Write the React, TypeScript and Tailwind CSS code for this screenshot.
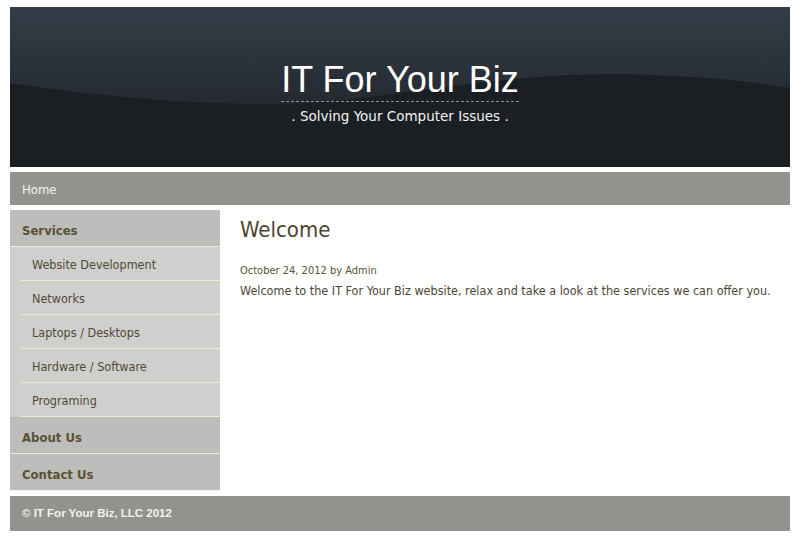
import React from "react";

const services = [
  "Website Development",
  "Networks",
  "Laptops / Desktops",
  "Hardware / Software",
  "Programing",
];

function HeaderBg() {
  return (
    <svg
      className="absolute inset-0 h-full w-full"
      viewBox="0 0 780 160"
      preserveAspectRatio="none"
    >
      <defs>
        <linearGradient id="sky" x1="0" y1="0" x2="0" y2="1">
          <stop offset="0" stopColor="#343d48" />
          <stop offset="1" stopColor="#252a30" />
        </linearGradient>
      </defs>
      <rect width="780" height="160" fill="#1b1e22" />
      <path
        d="M0 0 H780 V81 C700 68 620 66 560 68 C470 72 380 90 300 96 C200 100 90 90 0 76 Z"
        fill="url(#sky)"
      />
    </svg>
  );
}

const sideHead =
  "flex h-[37px] items-center border-b bg-[#bdbdbb] px-[12px] pt-[6px] text-[13px] font-bold text-[#5a5233]";

export default function App() {
  return (
    <div className="min-h-[541px] w-[797px] bg-white pt-[7px] font-['DejaVu_Sans_Condensed','DejaVu_Sans',sans-serif]">
      <div className="mx-[10px] w-[780px]">
        {/* header */}
        <div className="relative h-[160px] overflow-hidden">
          <HeaderBg />
          <div className="relative flex flex-col items-center pt-[53px]">
            <h1 className="border-b border-dashed border-[#8a8f95] pb-[1px] font-['Liberation_Sans',Arial,sans-serif] text-[36px] leading-[40px] text-white">
              IT For Your Biz
            </h1>
            <div className="mt-[6px] font-['DejaVu_Sans',sans-serif] text-[13.5px] leading-[16px] text-[#f2f2f2]">
              . Solving Your Computer Issues .
            </div>
          </div>
        </div>

        {/* nav */}
        <div className="mt-[5px] flex h-[33px] items-center bg-[#93938d] px-[12px] pt-[3px] text-[13px] text-[#f4f4f0]">
          Home
        </div>

        {/* body */}
        <div className="mt-[5px] flex">
          <div className="w-[210px] shrink-0">
            <div className={sideHead + " border-[#ecebd8]"}>Services</div>
            <div className="bg-[#cfcfcd]">
              {services.map((s) => (
                <div key={s} className="pl-[11px]">
                  <div className="flex h-[34px] items-center border-b border-[#ecebd8] pl-[11px] pt-[3px] text-[12.5px] text-[#4f4a38]">
                    {s}
                  </div>
                </div>
              ))}
            </div>
            <div className={sideHead + " border-[#ecebd8]"}>About Us</div>
            <div className={sideHead + " border-[#f4f3e4]"}>Contact Us</div>
          </div>

          <div className="flex-1 pl-[20px] pt-[6px]">
            <h2 className="text-[22px] leading-[28px] text-[#4b4530]">Welcome</h2>
            <div className="mt-[20px] text-[11px] leading-[14px] text-[#5a5336]">
              October 24, 2012 by Admin
            </div>
            <p className="mt-[5px] text-[12.5px] leading-[16px] text-[#4b4636]">
              Welcome to the IT For Your Biz website, relax and take a look at the services we can offer you.
            </p>
          </div>
        </div>

        {/* footer */}
        <div className="mt-[5px] flex h-[35px] items-center bg-[#93938d] px-[12px] font-['Liberation_Sans',Arial,sans-serif] text-[11.5px] font-bold text-[#f2f2ee]">
          © IT For Your Biz, LLC 2012
        </div>
      </div>
    </div>
  );
}
